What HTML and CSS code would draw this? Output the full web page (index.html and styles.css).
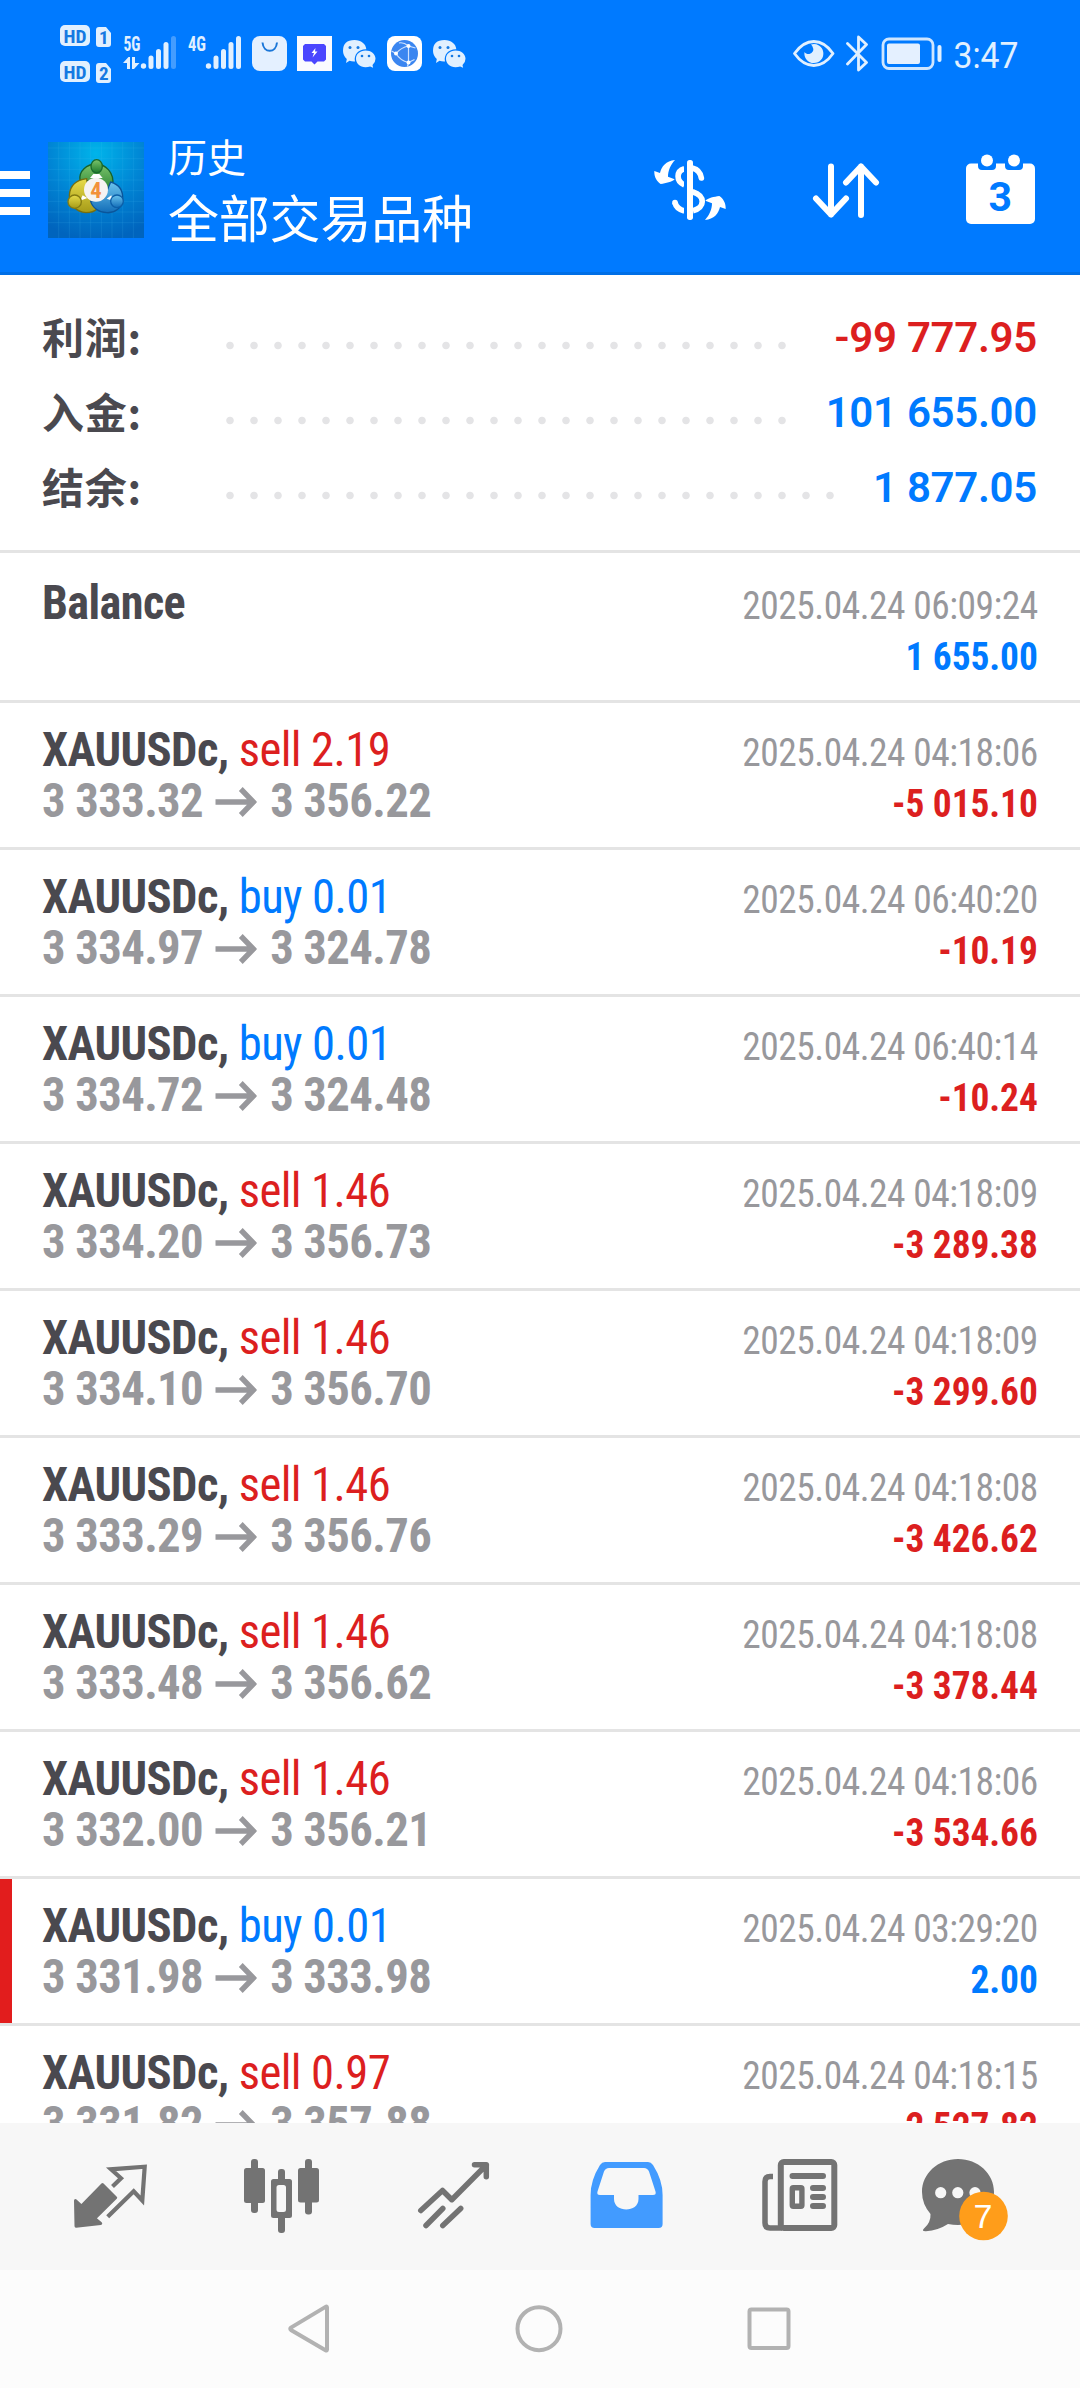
FILE: index.html
```html
<!DOCTYPE html>
<html lang="zh-CN">
<head>
<meta charset="utf-8">
<title>历史</title>
<link rel="stylesheet" href="styles.css">
</head>
<body>
<div class="screen">
<header class="header">
  <div class="statusbar">
    <svg class="hd" width="51" height="108" viewBox="60 0 51 108" fill="#e1f0ff">
      <rect x="60" y="25" width="30" height="21" rx="5"/><rect x="60" y="61" width="30" height="21" rx="5"/>
      <path d="M99 27h7l5 6v11a3 3 0 0 1-3 3h-9a3 3 0 0 1-3-3V30a3 3 0 0 1 3-3zM99 63h7l5 6v11a3 3 0 0 1-3 3h-9a3 3 0 0 1-3-3V66a3 3 0 0 1 3-3z"/>
      <g class="cut" font-size="19"><text x="63.5" y="42.5" textLength="23" lengthAdjust="spacingAndGlyphs">HD</text><text x="63.5" y="78.5" textLength="23" lengthAdjust="spacingAndGlyphs">HD</text><text x="99" y="44">1</text><text x="99" y="80">2</text></g>
    </svg>
    <svg class="net" width="53" height="108" viewBox="123 0 53 108" fill="#e1f0ff">
      <text x="123.5" y="51" font-size="21" textLength="17" lengthAdjust="spacingAndGlyphs">5G</text>
      <path d="M123 63l5.500-6h1.500v12h-3v-6zM132 57h3v6h4.500l-5.500 6h-2z"/>
      <circle cx="143.500" cy="66" r="2.700"/>
      <rect x="148.500" y="55.500" width="5" height="13.500" rx="2.500"/><rect x="156" y="49" width="5" height="20" rx="2.500"/><rect x="163.500" y="42" width="5" height="27" rx="2.500"/><rect x="171" y="36" width="5" height="33" rx="2.500" opacity=".3"/>
    </svg>
    <svg class="net" width="53" height="108" viewBox="188 0 53 108" fill="#e1f0ff">
      <text x="188" y="51" font-size="21" textLength="18" lengthAdjust="spacingAndGlyphs">4G</text>
      <circle cx="208.500" cy="66" r="2.700"/>
      <rect x="213.500" y="55.500" width="5" height="13.500" rx="2.500"/><rect x="221" y="49" width="5" height="20" rx="2.500"/><rect x="228.500" y="42" width="5" height="27" rx="2.500"/><rect x="236" y="36" width="5" height="33" rx="2.500"/>
    </svg>
    <svg class="app" width="35" height="108" viewBox="252 0 35 108">
      <rect x="252" y="36" width="35" height="35" rx="8" fill="#e4f0ff"/><path d="M262.500 42.500c1 11 13.500 11 14.500 0" fill="none" stroke="#1a76d8" stroke-width="2"/>
    </svg>
    <svg class="app short" width="35" height="108" viewBox="297 0 35 108">
      <path fill="#fafbff" d="M297 36h35v35h-35z"/><path fill="#4a46ff" d="M305 44h19l2 2v13.500l-2 2h-6.500l-3 3-3-3H305l-2-2V46z"/><path fill="#fff" d="M315.500 48l-4 5h2.500l-1.500 4.500 5-6H315z"/>
    </svg>
    <svg class="app" width="33" height="108" viewBox="343 0 33 108"><use href="#wechat" x="343" y="40"/></svg>
    <svg class="app" width="35" height="108" viewBox="387 0 35 108">
      <rect x="387" y="36" width="35" height="35" rx="8" fill="#fff"/><circle cx="404.500" cy="53.500" r="13.500" fill="#3b86f0"/>
      <path d="M399 43c4-1 7 1 9.500 3l7 2M408.500 46v16.500M396 53.500q5-6 12.500-7.500M396 53.500q4 7 12.500 9M396 53.500l-4.500-2.500m17 11.500l6-3m-6 3l-1 4" fill="none" stroke="#cfe3ff" stroke-width="1.200"/><g fill="#fff"><circle cx="408.500" cy="46" r="2"/><circle cx="396" cy="53.500" r="2"/><circle cx="408.500" cy="62.500" r="2"/></g>
    </svg>
    <svg class="app" width="33" height="108" viewBox="433 0 33 108"><use href="#wechat" x="433" y="40"/></svg>
    <svg class="eye" width="42" height="108" viewBox="793 0 42 108">
      <path d="M794.500 53.500Q803 41.500 813.800 41.500T833 53.500Q824.600 65.500 813.800 65.500T794.500 53.500z" fill="none" stroke="#e1f0ff" stroke-width="2.800" stroke-linejoin="round"/><path d="M811 44.500A9.500 9.500 0 1 1 804.500 52C808 57 815 52 813 48Q812.500 45.500 811 44.500z" fill="#e1f0ff"/>
    </svg>
    <svg class="bt" width="23" height="108" viewBox="846 0 23 108" fill="none" stroke="#e1f0ff" stroke-width="2.800" stroke-linejoin="round" stroke-linecap="round"><path d="M847.500 43.500l19 19-8 7.500V37l8 7.500-19 19.500"/></svg>
    <svg class="battery" width="61" height="108" viewBox="881 0 61 108">
      <rect x="883" y="39" width="50" height="29.500" rx="6" fill="none" stroke="#cfe6ff" stroke-width="2.800"/><rect x="887" y="43.500" width="33" height="20.500" rx="2" fill="#e4f0ff"/><rect x="937.500" y="45" width="4" height="17" rx="2" fill="#e1f0ff"/>
    </svg>
    <svg class="clock" width="68" height="108" viewBox="952 0 68 108" fill="#e1f0ff"><text x="953.5" y="67.500" font-size="36" textLength="65" lengthAdjust="spacingAndGlyphs">3:47</text></svg>
  </div>
  <div class="appbar">
    <div class="menu"><i></i><i></i><i></i></div>
    <svg class="logo" width="96" height="96" viewBox="24 36 288 288">
      <defs>
        <radialGradient id="sky" cx=".5" cy=".12" r=".9"><stop offset="0" stop-color="#00b4ea"/><stop offset=".55" stop-color="#0084d4"/><stop offset="1" stop-color="#0064bd"/></radialGradient>
        <linearGradient id="green" x2="0" y2="1"><stop stop-color="#7cc46c"/><stop offset="1" stop-color="#1c7a2b"/></linearGradient>
        <linearGradient id="gold" x2="0" y2="1"><stop stop-color="#e8dc4a"/><stop offset="1" stop-color="#a59a17"/></linearGradient>
        <linearGradient id="aqua" x2="0" y2="1"><stop stop-color="#6cc4ee"/><stop offset="1" stop-color="#126db8"/></linearGradient>
      </defs>
      <path fill="url(#sky)" d="M24 36h288v288H24z"/>
      <path d="M56 36v288M88 36v288M120 36v288M152 36v288M184 36v288M216 36v288M248 36v288M280 36v288M24 54h288M24 86h288M24 118h288M24 150h288M24 182h288M24 214h288M24 246h288M24 278h288" stroke="#4fc4f4" stroke-opacity=".22" stroke-width="2"/>
      <g stroke-width="4">
        <path d="M120 150c-4-26 20-48 48-48s56 26 50 64c-2 12-6 22-14 30l-36-40z" fill="url(#green)" stroke="#17632b"/>
        <path d="M140 146c-32 4-50 20-52 50 0 26 20 50 50 52 14 0 26-4 32-10l-26-54z" fill="url(#gold)" stroke="#756e10"/>
        <path d="M212 156c28 8 38 28 36 54-2 24-24 40-48 38-22 0-42-14-48-34l40-10z" fill="url(#aqua)" stroke="#0b559a"/>
        <path d="M150 144l10-12h18l10 12zM120 212l8-16 14 8zM200 206l14-10 4 16z" fill="#fff" stroke="none"/>
        <ellipse cx="170" cy="109" rx="17" ry="20" fill="url(#green)" stroke="#1a6b2d"/>
        <circle cx="104" cy="215" r="20" fill="url(#gold)" stroke="#847b12"/>
        <circle cx="231" cy="214" r="19" fill="url(#aqua)" stroke="#0d5fa8"/>
      </g>
      <circle cx="168" cy="179" r="36" fill="#f5f3f2"/>
      <text class="four" x="151" y="203" font-size="68">4</text>
    </svg>
    <div class="titles"><div class="caption">历史</div><div class="title">全部交易品种</div></div>
    <svg class="act" width="72" height="167" viewBox="654 108 72 167">
      <g transform="translate(640 140) scale(.33333)" fill="none" stroke="#fff" stroke-width="17">
        <path d="M133 86C108 93 108 124 133 135M159 156C196 166 196 204 159 212"/>
        <path d="M159 85C172 88 181 98 184 114" stroke-linecap="round"/><path d="M105 188C108 202 118 209 133 213"/><circle cx="105" cy="188" r="8.500" fill="#fff" stroke="none"/>
        <g fill="#fff" stroke="none"><path d="M105 60C78 62 64 80 60 99L43 93C42 110 50 124 62 132C78 130 96 126 104 118L84 110C84 92 92 74 105 60z"/><path d="M195 240C222 238 236 220 240 201L257 207C258 190 250 176 238 168C222 170 204 174 196 182L216 190C216 208 208 226 195 240z"/></g>
        <path d="M132 60h9v180h-9z" fill="#007aff" stroke="none"/>
        <rect x="141" y="60" width="18" height="180" rx="8" fill="#fff" stroke="none"/>
        <path d="M157 146l14 8v10h-14z" fill="#fff" stroke="none"/>
      </g>
    </svg>
    <svg class="act sort" width="68" height="167" viewBox="812 108 68 167" fill="none" stroke="#fff" stroke-width="6" stroke-linecap="round" stroke-linejoin="round"><path d="M831 166.500V214.500M816 198.500l15 16 15-16M861 215V166.500M846 182.500l15-16 15 16"/></svg>
    <svg class="act cal" width="69" height="167" viewBox="966 108 69 167">
      <rect x="966" y="163.500" width="69" height="60.500" rx="5" fill="#fff"/>
      <path d="M978 162h18v4a4 4 0 0 1-4 4h-10a4 4 0 0 1-4-4zM1005 162h18v4a4 4 0 0 1-4 4h-10a4 4 0 0 1-4-4z" fill="#007aff"/><circle cx="987" cy="160.500" r="6" fill="#fff"/><circle cx="1014" cy="160.500" r="6" fill="#fff"/>
      <text class="day" x="988.5" y="211" font-size="41">3</text>
    </svg>
  </div>
</header>

<section class="summary">
  <div class="sum"><span class="label">利润:</span><span class="dots"></span><b class="neg">-99 777.95</b></div>
  <div class="sum"><span class="label">入金:</span><span class="dots"></span><b class="pos">101 655.00</b></div>
  <div class="sum"><span class="label">结余:</span><span class="dots long"></span><b class="pos">1 877.05</b></div>
</section>

<main class="deals">
  <div class="deal balance"><div class="l"><b>Balance</b></div><div class="r"><time>2025.04.24 06:09:24</time><b class="pos">1 655.00</b></div></div>
  <div class="deal"><div class="l"><div><b>XAUUSDc,</b> <span class="neg">sell 2.19</span></div><div class="price">3 333.32<svg class="to" viewBox="0 0 42 30"><path d="M0 15h37M26 2l13 13-13 13"/></svg>3 356.22</div></div><div class="r"><time>2025.04.24 04:18:06</time><b class="neg">-5 015.10</b></div></div>
  <div class="deal"><div class="l"><div><b>XAUUSDc,</b> <span class="pos">buy 0.01</span></div><div class="price">3 334.97<svg class="to" viewBox="0 0 42 30"><path d="M0 15h37M26 2l13 13-13 13"/></svg>3 324.78</div></div><div class="r"><time>2025.04.24 06:40:20</time><b class="neg">-10.19</b></div></div>
  <div class="deal"><div class="l"><div><b>XAUUSDc,</b> <span class="pos">buy 0.01</span></div><div class="price">3 334.72<svg class="to" viewBox="0 0 42 30"><path d="M0 15h37M26 2l13 13-13 13"/></svg>3 324.48</div></div><div class="r"><time>2025.04.24 06:40:14</time><b class="neg">-10.24</b></div></div>
  <div class="deal"><div class="l"><div><b>XAUUSDc,</b> <span class="neg">sell 1.46</span></div><div class="price">3 334.20<svg class="to" viewBox="0 0 42 30"><path d="M0 15h37M26 2l13 13-13 13"/></svg>3 356.73</div></div><div class="r"><time>2025.04.24 04:18:09</time><b class="neg">-3 289.38</b></div></div>
  <div class="deal"><div class="l"><div><b>XAUUSDc,</b> <span class="neg">sell 1.46</span></div><div class="price">3 334.10<svg class="to" viewBox="0 0 42 30"><path d="M0 15h37M26 2l13 13-13 13"/></svg>3 356.70</div></div><div class="r"><time>2025.04.24 04:18:09</time><b class="neg">-3 299.60</b></div></div>
  <div class="deal"><div class="l"><div><b>XAUUSDc,</b> <span class="neg">sell 1.46</span></div><div class="price">3 333.29<svg class="to" viewBox="0 0 42 30"><path d="M0 15h37M26 2l13 13-13 13"/></svg>3 356.76</div></div><div class="r"><time>2025.04.24 04:18:08</time><b class="neg">-3 426.62</b></div></div>
  <div class="deal"><div class="l"><div><b>XAUUSDc,</b> <span class="neg">sell 1.46</span></div><div class="price">3 333.48<svg class="to" viewBox="0 0 42 30"><path d="M0 15h37M26 2l13 13-13 13"/></svg>3 356.62</div></div><div class="r"><time>2025.04.24 04:18:08</time><b class="neg">-3 378.44</b></div></div>
  <div class="deal"><div class="l"><div><b>XAUUSDc,</b> <span class="neg">sell 1.46</span></div><div class="price">3 332.00<svg class="to" viewBox="0 0 42 30"><path d="M0 15h37M26 2l13 13-13 13"/></svg>3 356.21</div></div><div class="r"><time>2025.04.24 04:18:06</time><b class="neg">-3 534.66</b></div></div>
  <div class="deal flagged"><div class="l"><div><b>XAUUSDc,</b> <span class="pos">buy 0.01</span></div><div class="price">3 331.98<svg class="to" viewBox="0 0 42 30"><path d="M0 15h37M26 2l13 13-13 13"/></svg>3 333.98</div></div><div class="r"><time>2025.04.24 03:29:20</time><b class="pos">2.00</b></div></div>
  <div class="deal"><div class="l"><div><b>XAUUSDc,</b> <span class="neg">sell 0.97</span></div><div class="price">3 331.82<svg class="to" viewBox="0 0 42 30"><path d="M0 15h37M26 2l13 13-13 13"/></svg>3 357.88</div></div><div class="r"><time>2025.04.24 04:18:15</time><b class="neg">-2 527.82</b></div></div>
</main>

<nav class="tabs">
  <svg viewBox="24 2123 172 147">
    <path d="M75.500 2200.500l6 5.500 21-21.500 13.200 13.300-21 20.700 6 5-24.700 2.700z" fill="#737373" stroke="#737373" stroke-width="3" stroke-linejoin="round"/>
    <path d="M112.500 2186.500l8.500-8.200-10-9 33.700-2.600-2.400 33.800-8.600-9.200-26 25.500" fill="none" stroke="#737373" stroke-width="4.200"/>
  </svg>
  <svg viewBox="196 2123 172 147" fill="#737373">
    <rect x="244" y="2168" width="21" height="35" rx="2.500"/><rect x="251" y="2159" width="7" height="54" rx="3"/>
    <path fill-rule="evenodd" d="M273.500 2179h16a2.500 2.500 0 0 1 2.500 2.500v34a2.500 2.500 0 0 1-2.500 2.500h-16a2.500 2.500 0 0 1-2.500-2.500v-34a2.500 2.500 0 0 1 2.500-2.500zm5.500 6a2.500 2.500 0 0 0-2.500 2.500v22a2.500 2.500 0 0 0 2.500 2.500h4.500a2.500 2.500 0 0 0 2.500-2.500v-22a2.500 2.500 0 0 0-2.500-2.500z"/><rect x="278" y="2169" width="7" height="14" rx="3"/><rect x="278" y="2215" width="7" height="18" rx="3"/>
    <rect x="298" y="2168" width="21" height="34.500" rx="2.500"/><rect x="305" y="2159" width="7" height="55.500" rx="3"/>
  </svg>
  <svg viewBox="368 2123 172 147" fill="none" stroke="#737373" stroke-width="5.500" stroke-linecap="round" stroke-linejoin="round"><path d="M420.800 2210.500l21.700-20 9.300 9.200 34.500-34.700M474.500 2164.700h11.800v12M426 2225.500l16.800-17M442.800 2225.500l17.900-17"/></svg>
  <svg viewBox="540 2123 172 147">
    <path fill-rule="evenodd" fill="#429bff" d="M605 2162h43q3 0 5 3 9.600 15 9.600 30v29q0 4-4 4h-64q-4 0-4-4v-29q0-15 9.400-30 2-3 5-3zm4 6q-3.500 0-5 3.500l-6.500 20q-1 3.500 2.500 3.500h14v4c0 14 24.500 14 24.500 0v-4H653q3.500 0 2.500-3.500l-6.500-20q-1.500-3.500-5-3.500z"/>
  </svg>
  <svg viewBox="712 2123 172 147" fill="none" stroke="#737373">
    <rect x="780.800" y="2162" width="53.500" height="66" rx="3" stroke-width="6"/><path d="M773 2176.500h-3q-5 0-5 5v41.500q0 5 5 5h12" stroke-width="5.500"/>
    <path d="M792.500 2176h30.500M813 2188h10M813 2197h10M813 2206h10" stroke-width="6" stroke-linecap="round"/><rect x="792.300" y="2187.700" width="9.600" height="18.600" rx="1" stroke-width="5.400"/>
  </svg>
  <svg viewBox="884 2123 172 147">
    <path fill="#737373" d="M958 2159c20 0 36 14.500 36 33s-16 33-36 33q-5 0-10-1-10 6.500-22 7.200-5 .2-2-2.700 7-6 6.500-14.500Q922 2204 922 2192c0-18.500 16-33 36-33z"/><g fill="#f7f7f7"><circle cx="940.700" cy="2192.700" r="5.600"/><circle cx="957.800" cy="2192.700" r="5.600"/><circle cx="975" cy="2192.700" r="5.600"/></g>
    <circle cx="983.500" cy="2216" r="24.300" fill="#ff9d1a"/><text class="count" x="983" y="2228" font-size="34">7</text>
  </svg>
</nav>
<footer class="system">
  <svg width="42" height="118" viewBox="288 2270 42 118"><path d="M327 2307.500v42q0 1.500-1.500.7l-34.500-20.200q-1.500-1.200 0-2.400l34.500-20.700q1.500-.8 1.500.6z"/></svg>
  <svg width="50" height="118" viewBox="515 2270 50 118"><circle cx="540" cy="2328.700" r="21.500"/></svg>
  <svg width="44" height="118" viewBox="747 2270 44 118"><rect x="749.500" y="2309.500" width="39" height="38.500" rx="2"/></svg>
</footer>
</div>
<svg class="sprite" width="0" height="0"><defs><g id="wechat">
  <path fill="#e1f0ff" d="M11.500 0C18 0 23 4 23.300 9.300 16 9 10.500 14.500 12 21.500q-3 .2-5.500-.7L3 23l.8-4Q0 15.500 0 10.700 0 0 11.500 0z"/><path fill="#e1f0ff" d="M22.500 10.500c5.500 0 10 3.500 10 8.300q0 3.700-3 6.200l.6 2.800-3-1.300q-2 .7-4.600.7c-5.500 0-9.500-3.700-9.500-8.400s4-8.300 9.500-8.300z"/>
  <g fill="#1579e2"><circle cx="7" cy="7.500" r="1.500"/><circle cx="15" cy="7.500" r="1.500"/><circle cx="19" cy="16" r="1.300"/><circle cx="26" cy="16" r="1.300"/></g>
</g></defs></svg>
</body>
</html>
```
FILE: styles.css
```css
* { box-sizing: border-box; }
body {
  margin: 0;
  background: #fff;
  font-family: "Roboto Condensed", "Noto Sans CJK SC", sans-serif;
  color: #4a494f;
}
svg { display: block; flex: none; }
.sprite { position: absolute; }
.screen { width: 1080px; height: 2388px; display: flex; flex-direction: column; overflow: hidden; }

.header { height: 275px; flex: none; background: #007aff; border-bottom: 3px solid #006fe6; }
.statusbar { display: flex; height: 108px; padding-left: 60px; font-weight: 700; }
.hd, .net { margin-right: 12px; }
.net + .net { margin-right: 11px; }
.app { margin-right: 11px; }
.app:has(+ .short) { margin-right: 10px; }
.cut { fill: #1579e2; }
.eye { margin-left: 316px; margin-right: 11px; }
.bt { margin-right: 12px; }
.battery { margin-right: 10px; }
.clock { overflow: visible; font-family: Roboto, sans-serif; font-weight: 400; }

.appbar { display: flex; height: 164px; }
.menu { width: 48px; padding-top: 63px; display: flex; flex-direction: column; gap: 10px; }
.menu i { width: 30px; height: 8px; background: #fff; }
.logo { margin-top: 34px; }
.four { fill: #f2913a; font-weight: 700; }
.titles { width: 486px; margin: 21px 0 0 24px; color: #fff; font-family: "Noto Sans CJK SC", sans-serif; white-space: nowrap; }
.caption { font-size: 39px; line-height: 52px; }
.title { font-size: 51px; line-height: 70px; letter-spacing: -.2px; }
.sort { margin: 0 86px; }
.day { font-family: Roboto, sans-serif; font-weight: 700; fill: #007aff; }

.summary { height: 278px; flex: none; padding: 25px 43px 0 42px; border-bottom: 3px solid #e4e4e4; }
.sum { display: flex; height: 75px; font: 700 42px/75px Roboto, sans-serif; }
.label { width: 176px; font-family: "Noto Sans CJK SC", sans-serif; line-height: 71px; letter-spacing: .8px; }
.dots { width: 576px; background: radial-gradient(circle at 12px 45.500px, #e4e4e6 3.300px, transparent 4.200px) 0 0 / 24px 75px; }
.dots.long { width: 624px; }
.sum b { margin-left: auto; font-weight: 600; letter-spacing: -.3px; }
.neg { color: #dc1f1f; }
.pos { color: #007aff; }

.deals { flex: 1; min-height: 0; overflow: hidden; }
.deal { height: 147px; padding: 21px 42px 0; display: flex; justify-content: space-between; border-bottom: 3px solid #e4e4e4; line-height: 51px; white-space: nowrap; }
.balance { height: 150px; padding-top: 24px; }
.flagged { box-shadow: inset 12px 0 #e21d1d; }
.l { font-size: 48px; letter-spacing: -.6px; transform: scaleX(.972); transform-origin: 0 0; }
.balance .l { transform: scaleX(.962); }
.price { display: flex; align-items: center; font-weight: 700; color: #98989c; }
.to { width: 43px; height: 30px; margin: 3px 14px 0 12px; fill: none; stroke: currentColor; stroke-width: 5.500; }
.r { display: flex; flex-direction: column; align-items: flex-end; padding-top: 4px; font-size: 39px; transform: scaleX(.96); transform-origin: 100% 0; }
time { color: #98989c; letter-spacing: -.5px; }
.r b { letter-spacing: -.1px; }

.tabs { height: 147px; flex: none; padding: 0 24px; display: grid; grid-template-columns: repeat(6, 172px); background: #f7f7f7; }
.count { font-family: "Liberation Sans", sans-serif; fill: #fff; text-anchor: middle; }
.system { height: 118px; flex: none; padding: 0 289px 0 288px; display: flex; justify-content: space-between; background: #fcfcfc; fill: none; stroke: #b2b2b2; stroke-width: 4; }
```
